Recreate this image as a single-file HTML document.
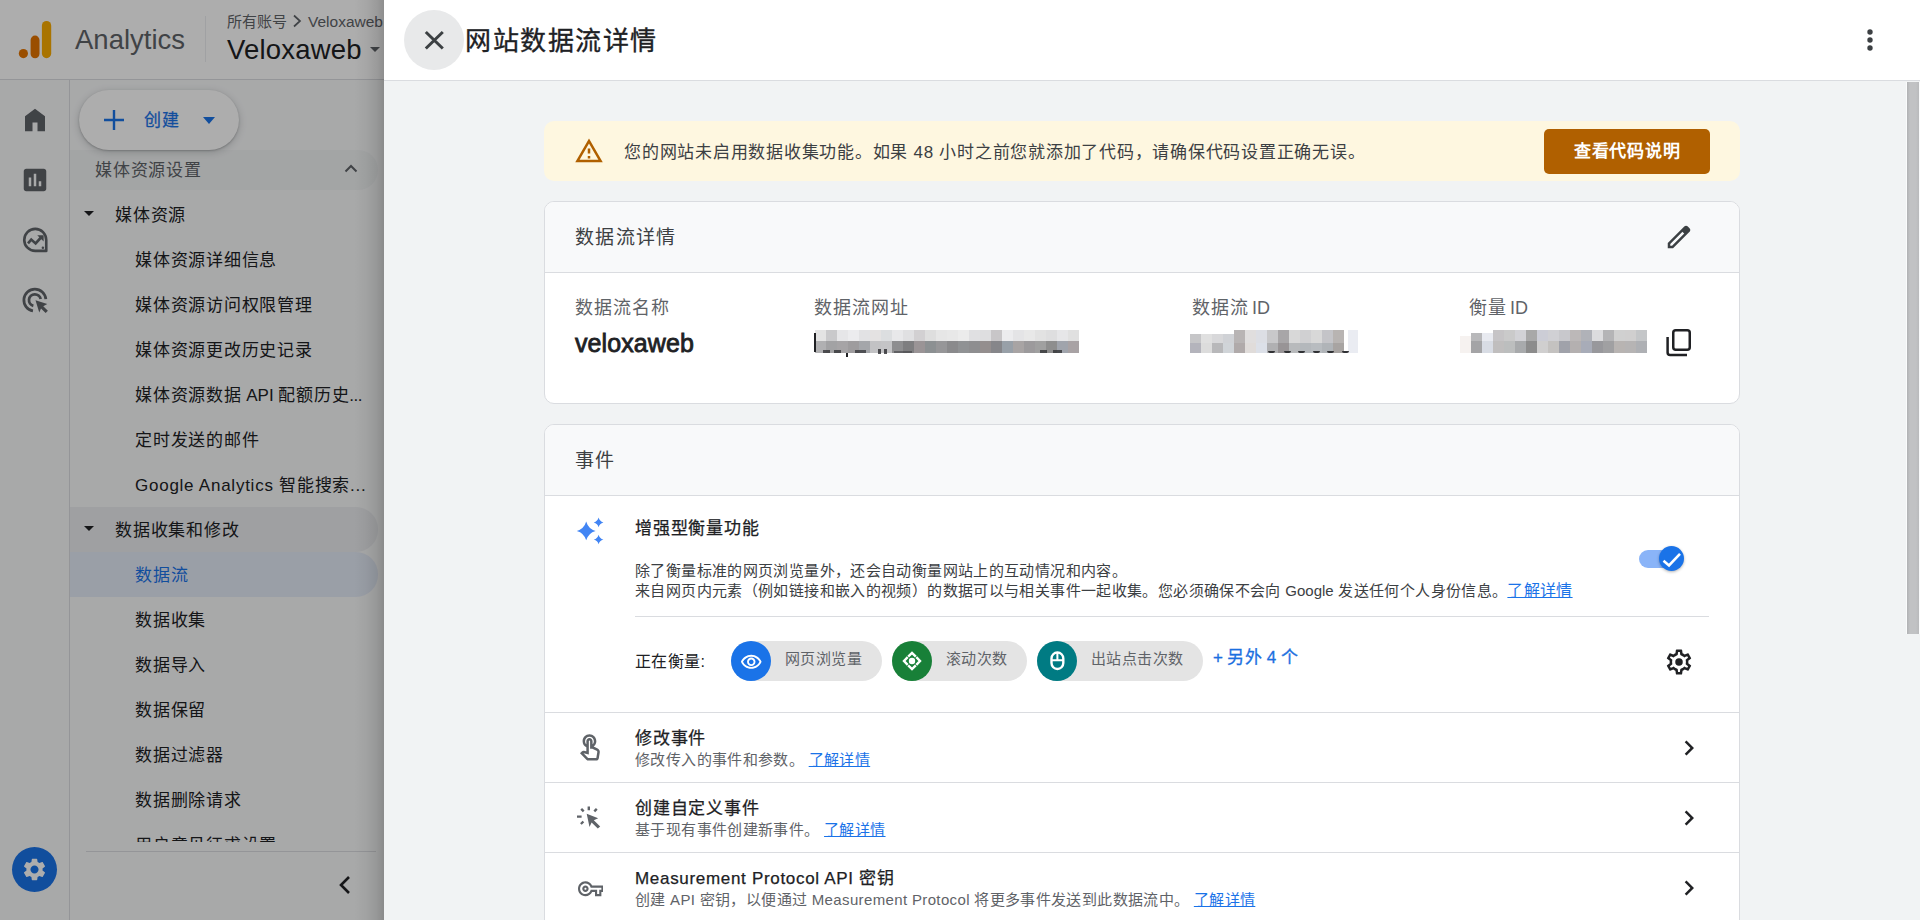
<!DOCTYPE html>
<html lang="zh-CN">
<head>
<meta charset="utf-8">
<title>Analytics</title>
<style>
*{box-sizing:border-box;margin:0;padding:0}
html,body{width:1920px;height:920px;overflow:hidden;background:#f1f3f4;font-family:"Liberation Sans",sans-serif;color:#202124}
.abs{position:absolute}
/* ---------- left (dimmed) ---------- */
#left{position:absolute;left:0;top:0;width:384px;height:920px;background:#f8f9fa;overflow:hidden}
#lhead{position:absolute;left:0;top:0;width:384px;height:80px;background:#fff;border-bottom:1px solid #dadce0}
#rail{position:absolute;left:0;top:80px;width:70px;height:840px;border-right:1px solid #dadce0}
#nav{position:absolute;left:70px;top:80px;width:314px;height:840px}
#dim{position:absolute;left:0;top:0;width:384px;height:920px;background:rgba(0,0,0,.32)}
#edge{position:absolute;left:354px;top:0;width:30px;height:920px;background:linear-gradient(90deg,rgba(0,0,0,0),rgba(0,0,0,.04) 40%,rgba(0,0,0,.1) 75%,rgba(0,0,0,.18))}
.ni{position:absolute;left:65px;font-size:17px;letter-spacing:.75px;line-height:24px;white-space:nowrap;color:#202124}
.ng{position:absolute;left:45px;font-size:17px;letter-spacing:.75px;line-height:24px;white-space:nowrap;color:#202124}
.tri{position:absolute;width:0;height:0;border-left:5px solid transparent;border-right:5px solid transparent;border-top:5px solid #202124}
/* ---------- main ---------- */
#main{position:absolute;left:384px;top:0;width:1536px;height:920px;background:#f1f3f4;overflow:hidden}
#mhead{position:absolute;left:0;top:0;width:1536px;height:81px;background:#fff;border-bottom:1px solid #dadce0}
.card{position:absolute;left:160px;width:1196px;background:#fff;border:1px solid #dadce0;border-radius:10px;overflow:hidden}
.chead{position:absolute;left:0;top:0;width:100%;height:71px;background:#f8f9fa;border-bottom:1px solid #dadce0}
.chead span{position:absolute;left:30px;top:23px;font-size:19px;letter-spacing:1.25px;line-height:26px;color:#3c4043}
.lbl{position:absolute;font-size:18px;letter-spacing:1px;line-height:24px;color:#5f6368;white-space:nowrap}
.blur{position:absolute;height:24px;filter:blur(1.2px);opacity:.9}
.row{position:absolute;left:0;width:100%;height:70px;border-top:1px solid #dadce0}
.row .t{position:absolute;left:90px;top:14px;font-size:17px;letter-spacing:.75px;line-height:24px;-webkit-text-stroke:.25px #202124;color:#202124;white-space:nowrap}
.row .d{position:absolute;left:90px;top:37px;font-size:15px;letter-spacing:.375px;line-height:20px;color:#5f6368;white-space:nowrap}
a.lk{color:#1a73e8;text-decoration:underline;font-size:16px;letter-spacing:.3px;text-underline-offset:1px;text-decoration-thickness:1px}
.chip{position:absolute;top:0;height:40px;border-radius:20px;background:#e4e4e4;font-size:15px;letter-spacing:.375px;line-height:40px;color:#5f6368;white-space:nowrap}
.chip i{position:absolute;left:0;top:0;width:40px;height:40px;border-radius:50%}
.chip span{position:absolute;left:54px;top:-2px}
.row a.lk{font-size:15px;letter-spacing:.375px}
</style>
</head>
<body>
<!-- LEFT -->
<div id="left">
  <div id="lhead">
    <svg class="abs" style="left:0;top:0" width="70" height="80" viewBox="0 0 70 80">
      <circle cx="23.4" cy="53.6" r="4.6" fill="#e37400"/>
      <rect x="30.6" y="35.6" width="8.9" height="22.6" rx="4.45" fill="#e37400"/>
      <rect x="41.9" y="21" width="9.3" height="37.2" rx="4.65" fill="#f9ab00"/>
    </svg>
    <div class="abs" id="t-analytics" style="left:75px;top:24px;font-size:27.5px;line-height:32px;color:#5f6368;white-space:nowrap">Analytics</div>
    <div class="abs" style="left:205px;top:16px;width:1px;height:46px;background:#eceef0"></div>
    <div class="abs" id="t-crumb" style="left:227px;top:12px;font-size:15px;line-height:20px;color:#5f6368;white-space:nowrap">所有账号</div>
    <svg class="abs" style="left:290px;top:13px" width="14" height="16" viewBox="0 0 14 16"><path d="M4 2.5 L10 8 L4 13.5" fill="none" stroke="#5f6368" stroke-width="1.7"/></svg>
    <div class="abs" id="t-crumb2" style="left:308px;top:12px;font-size:15.5px;line-height:20px;color:#5f6368;white-space:nowrap">Veloxaweb</div>
    <div class="abs" id="t-prop" style="left:227px;top:34px;letter-spacing:.2px;font-size:27.5px;line-height:32px;color:#202124;white-space:nowrap">Veloxaweb</div>
    <div class="tri" style="left:369.5px;top:47px;border-left-width:5.2px;border-right-width:5.2px;border-top-width:5.2px;border-top-color:#5f6368"></div>
  </div>
  <div id="rail">
    <!-- home -->
    <svg class="abs" style="left:20px;top:25px" width="30" height="30" viewBox="0 0 24 24"><path d="M4 21V9l8-6 8 6v12h-6v-7h-4v7z" fill="#5f6368"/></svg>
    <!-- reports -->
    <svg class="abs" style="left:20px;top:85px" width="30" height="30" viewBox="0 0 24 24"><path d="M19 3H5c-1.1 0-2 .9-2 2v14c0 1.100.9 2 2 2h14c1.100 0 2-.9 2-2V5c0-1.100-.9-2-2-2zM9 17H7v-7h2v7zm4 0h-2V7h2v10zm4 0h-2v-4h2v4z" fill="#5f6368"/></svg>
    <!-- explore -->
    <svg class="abs" style="left:20px;top:145px" width="30" height="30" viewBox="0 0 24 24"><path d="M12.200 3.100 A8.800 8.800 0 1 0 12.200 20.700 H21 V11.900 A8.800 8.800 0 0 0 12.200 3.100 Z" fill="none" stroke="#5f6368" stroke-width="2.100" stroke-linejoin="round"/><path d="M6.400 14.700 L9 11.700 L12.500 14.700 L16.600 10.200" fill="none" stroke="#5f6368" stroke-width="2.100"/><path d="M13.800 8.100 H18.900 V13.200 Z" fill="#5f6368"/><circle cx="18.300" cy="18.100" r="1" fill="#5f6368"/></svg>
    <!-- advertising -->
    <svg class="abs" style="left:20px;top:205px" width="30" height="30" viewBox="0 0 24 24"><path d="M10.370 20.770 A8.800 8.800 0 1 1 20.670 11.330" fill="none" stroke="#5f6368" stroke-width="2.200"/><path d="M10.680 16.640 A4.700 4.700 0 1 1 16.530 11.280" fill="none" stroke="#5f6368" stroke-width="2.200"/><path d="M12.400 12.200 L21.800 15.200 L18.600 16.900 L22.300 20.600 L20.500 22.400 L16.800 18.700 L15.400 21.900 Z" fill="#5f6368"/></svg>
    <!-- settings -->
    <div class="abs" style="left:12px;top:767px;width:45px;height:45px;border-radius:50%;background:#1a73e8"></div>
    <svg class="abs" style="left:21px;top:776px" width="27" height="27" viewBox="0 0 24 24"><path fill="#fff" d="M19.140 12.940c.040-.3.060-.61.060-.940 0-.320-.020-.640-.070-.940l2.030-1.580c.180-.140.230-.410.120-.610l-1.920-3.320c-.120-.220-.370-.290-.590-.220l-2.390.960c-.5-.380-1.030-.7-1.620-.940l-.36-2.540c-.040-.240-.240-.410-.480-.410h-3.840c-.240 0-.430.170-.470.410l-.36 2.540c-.59.240-1.130.570-1.620.940l-2.390-.960c-.220-.080-.470 0-.590.220L2.740 8.870c-.120.210-.080.470.120.610l2.030 1.580c-.050.3-.090.630-.090.940s.020.640.070.940l-2.030 1.580c-.180.140-.230.410-.120.610l1.920 3.320c.120.220.370.290.590.220l2.390-.960c.5.380 1.030.7 1.620.940l.36 2.540c.050.240.240.410.480.410h3.840c.240 0 .440-.170.470-.410l.36-2.540c.59-.240 1.130-.560 1.620-.940l2.390.960c.220.080.470 0 .59-.220l1.920-3.320c.120-.220.070-.470-.120-.610l-2.010-1.580zM12 15.600c-1.980 0-3.600-1.620-3.600-3.600s1.620-3.600 3.600-3.600 3.600 1.620 3.600 3.600-1.620 3.600-3.600 3.600z"/></svg>
  </div>
  <div id="nav">
    <div class="abs" style="left:0;top:70px;width:308px;height:40px;border-radius:0 20px 20px 0;background:#f1f3f4"></div>
    <div class="abs" style="left:25px;top:79px;font-size:17px;letter-spacing:.75px;line-height:24px;color:#5f6368;white-space:nowrap">媒体资源设置</div>
    <svg class="abs" style="left:273px;top:81px" width="16" height="16" viewBox="0 0 16 16"><path d="M2.500 10.500 L8 5 L13.500 10.500" fill="none" stroke="#5f6368" stroke-width="2"/></svg>
    <div class="tri" style="left:14px;top:131px"></div>
    <div class="ng" style="top:124px">媒体资源</div>
    <div class="ni" style="top:169px">媒体资源详细信息</div>
    <div class="ni" style="top:214px">媒体资源访问权限管理</div>
    <div class="ni" style="top:259px">媒体资源更改历史记录</div>
    <div class="ni" style="top:304px">媒体资源数据<span style="letter-spacing:0"> API </span>配额历史<span style="letter-spacing:-.5px">...</span></div>
    <div class="ni" style="top:349px">定时发送的邮件</div>
    <div class="ni" style="top:394px">Google Analytics 智能搜索...</div>
    <div class="abs" style="left:0;top:427px;width:308px;height:45px;border-radius:0 22px 22px 0;background:#eaecef"></div>
    <div class="tri" style="left:14px;top:446px"></div>
    <div class="ng" style="top:439px">数据收集和修改</div>
    <div class="abs" style="left:0;top:472px;width:308px;height:45px;border-radius:0 22px 22px 0;background:#e4eaf6"></div>
    <div class="ni" style="top:484px;color:#1a73e8">数据流</div>
    <div class="ni" style="top:529px">数据收集</div>
    <div class="ni" style="top:574px">数据导入</div>
    <div class="ni" style="top:619px">数据保留</div>
    <div class="ni" style="top:664px">数据过滤器</div>
    <div class="ni" style="top:709px">数据删除请求</div>
    <div class="ni" style="top:754px">用户意见征求设置</div>
    <div class="abs" style="left:0;top:762px;width:314px;height:78px;background:#f8f9fa"></div>
    <div class="abs" style="left:16px;top:771px;width:290px;height:1px;background:#dadce0"></div>
    <svg class="abs" style="left:265px;top:794px" width="20" height="22" viewBox="0 0 20 22"><path d="M14 3 L6 11 L14 19" fill="none" stroke="#202124" stroke-width="2.6"/></svg>
    <div class="abs" style="left:9px;top:10px;width:160px;height:60px;border-radius:30px;background:#fff;box-shadow:0 1px 2px rgba(60,64,67,.3),0 2px 6px 2px rgba(60,64,67,.15)"></div>
    <svg class="abs" style="left:33px;top:29px" width="22" height="22" viewBox="0 0 22 22"><path d="M11 1 V21 M1 11 H21" stroke="#1a73e8" stroke-width="2.4" fill="none"/></svg>
    <div class="abs" style="left:74px;top:29px;font-size:17px;letter-spacing:.75px;line-height:24px;color:#1a73e8;-webkit-text-stroke:.25px #1a73e8;white-space:nowrap">创建</div>
    <div class="tri" style="left:133px;top:37px;border-left-width:6px;border-right-width:6px;border-top-width:7px;border-top-color:#1a73e8"></div>
  </div>
  <div id="dim"></div>
  <div id="edge"></div>
</div>
<!-- MAIN -->
<div id="main">
  <div id="mhead">
    <div class="abs" style="left:20px;top:10px;width:60px;height:60px;border-radius:50%;background:#e8e9ea"></div>
    <svg class="abs" style="left:38px;top:28px" width="24" height="24" viewBox="0 0 24 24"><path d="M3.800 4 L20.800 20.500 M20.800 4 L3.800 20.500" stroke="#3c4043" stroke-width="3" fill="none"/></svg>
    <div class="abs" id="t-title" style="left:81px;top:23px;font-size:26px;letter-spacing:1.5px;line-height:36px;color:#202124;-webkit-text-stroke:.35px #202124;white-space:nowrap">网站数据流详情</div>
    <svg class="abs" style="left:1481px;top:26px" width="10" height="28" viewBox="0 0 10 28"><circle cx="5" cy="6" r="2.700" fill="#3c4043"/><circle cx="5" cy="14" r="2.700" fill="#3c4043"/><circle cx="5" cy="22" r="2.700" fill="#3c4043"/></svg>
  </div>
  <div id="content">
    <!-- banner -->
    <div class="abs" style="left:160px;top:121px;width:1196px;height:60px;border-radius:10px;background:#fef7e0"></div>
    <svg class="abs" style="left:190.25px;top:136.25px" width="30" height="30" viewBox="0 0 24 24"><path fill="#b06000" d="M12 5.990L19.530 19H4.470L12 5.990M12 2L1 21h22L12 2zm1 14h-2v2h2v-2zm0-6h-2v4h2v-4z"/></svg>
    <div class="abs" id="t-warn" style="left:240px;top:141px;font-size:17px;letter-spacing:.75px;line-height:24px;color:#3c4043;white-space:nowrap">您的网站未启用数据收集功能。如果 48 小时之前您就添加了代码，请确保代码设置正确无误。</div>
    <div class="abs" style="left:1160px;top:129px;width:166px;height:45px;border-radius:5px;background:#b06000;color:#fff;font-size:17px;letter-spacing:.75px;font-weight:700;line-height:45px;text-align:center;white-space:nowrap">查看代码说明</div>

    <!-- card 1 -->
    <div class="card" style="top:201px;height:203px">
      <div class="chead"><span>数据流详情</span></div>
      <svg class="abs" style="left:1119px;top:20px" width="30" height="30" viewBox="0 -960 960 960"><path d="M200-200h57l391-391-57-57-391 391v57Zm-80 80v-170l528-527q12-11 26.500-17t30.500-6q16 0 31 6t26 18l55 56q12 11 17.500 26t5.500 30q0 16-5.500 30.500T817-647L290-120H120Zm640-584-56-56 56 56Zm-141 85-28-29 57 57-29-28Z" fill="#3c4043"/></svg>
      <div class="lbl" style="left:30px;top:94px">数据流名称</div>
      <div class="lbl" style="left:269px;top:94px">数据流网址</div>
      <div class="lbl" style="left:647px;top:94px">数据流<span style="letter-spacing:0;word-spacing:-2px"> ID</span></div>
      <div class="lbl" style="left:924px;top:94px">衡量<span style="letter-spacing:0;word-spacing:-2px"> ID</span></div>
      <div class="abs" id="t-name" style="left:30px;top:126px;font-size:25px;line-height:30px;-webkit-text-stroke:.8px #202124;letter-spacing:.1px;color:#202124;white-space:nowrap">veloxaweb</div>
      <svg class="abs" style="left:1117px;top:124px" width="32" height="34" viewBox="0 0 32 34"><rect x="11.25" y="4.25" width="16.500" height="19.600" rx="2.500" fill="none" stroke="#202124" stroke-width="2.500"/><path d="M5.60 11.00 V26.60 Q5.60 29.10 8.10 29.10 H25.00" fill="none" stroke="#202124" stroke-width="2.500"/></svg>
      <div class="abs" style="left:270px;top:128px;width:264px;height:11px;background:linear-gradient(90deg,#e3e3e3 0px,#e3e3e3 11px,#c9c9cb 11px,#c9c9cb 22px,#e6e6e8 22px,#e6e6e8 33px,#ececee 33px,#ececee 44px,#e2e2e4 44px,#e2e2e4 55px,#e4e2e2 55px,#e4e2e2 66px,#dcdee0 66px,#dcdee0 77px,#e8e8ea 77px,#e8e8ea 88px,#e0e0e2 88px,#e0e0e2 99px,#d2d0d2 99px,#d2d0d2 110px,#dedede 110px,#dedede 121px,#e6e6e6 121px,#e6e6e6 132px,#e8e8e8 132px,#e8e8e8 143px,#ececec 143px,#ececec 154px,#e0e0e2 154px,#e0e0e2 165px,#dedee0 165px,#dedee0 176px,#c8c6c8 176px,#c8c6c8 187px,#ececee 187px,#ececee 198px,#e4e4e6 198px,#e4e4e6 209px,#e8e8e8 209px,#e8e8e8 220px,#e2e2e2 220px,#e2e2e2 231px,#dededf 231px,#dededf 242px,#e6e6e8 242px,#e6e6e8 253px,#e0e0e0 253px,#e0e0e0 264px)"></div><div class="abs" style="left:270px;top:139px;width:264px;height:12px;background:linear-gradient(90deg,#b0b0b2 0px,#b0b0b2 11px,#a2a2a4 11px,#a2a2a4 22px,#a6a4a6 22px,#a6a4a6 33px,#9e9c9e 33px,#9e9c9e 44px,#a4a6aa 44px,#a4a6aa 55px,#c2c2c4 55px,#c2c2c4 66px,#c4c4c6 66px,#c4c4c6 77px,#8e8e90 77px,#8e8e90 88px,#7e7e80 88px,#7e7e80 99px,#9a9496 99px,#9a9496 110px,#8c9092 110px,#8c9092 121px,#969698 121px,#969698 132px,#8a8a8c 132px,#8a8a8c 143px,#909294 143px,#909294 154px,#8e8e90 154px,#8e8e90 165px,#948e8e 165px,#948e8e 176px,#86868a 176px,#86868a 187px,#98a0a8 187px,#98a0a8 198px,#a8a4a4 198px,#a8a4a4 209px,#9c9a9c 209px,#9c9a9c 220px,#a0a0a0 220px,#a0a0a0 231px,#8e8e8e 231px,#8e8e8e 242px,#a0a4ac 242px,#a0a4ac 253px,#a8a2a4 253px,#a8a2a4 264px)"></div><div class="abs" style="left:269px;top:131px;width:2px;height:19px;background:#202124"></div><div class="abs" style="left:301px;top:151px;width:2px;height:4px;background:#202124"></div><div class="abs" style="left:278px;top:148px;width:7px;height:3px;background:#2a2b2e;opacity:0.75"></div><div class="abs" style="left:289px;top:148px;width:7px;height:3px;background:#2a2b2e;opacity:0.75"></div><div class="abs" style="left:310px;top:148px;width:11px;height:3px;background:#2a2b2e;opacity:0.7"></div><div class="abs" style="left:333px;top:147px;width:3px;height:5px;background:#2a2b2e;opacity:0.8"></div><div class="abs" style="left:339px;top:147px;width:3px;height:5px;background:#2a2b2e;opacity:0.8"></div><div class="abs" style="left:349px;top:149px;width:18px;height:2px;background:#2a2b2e;opacity:0.45"></div><div class="abs" style="left:495px;top:148px;width:7px;height:3px;background:#2a2b2e;opacity:0.75"></div><div class="abs" style="left:508px;top:148px;width:9px;height:3px;background:#2a2b2e;opacity:0.75"></div>
      <div class="abs" style="left:645px;top:132px;width:154px;height:9px;background:linear-gradient(90deg,#c6c6c8 0px,#c6c6c8 11px,#e0e0e0 11px,#e0e0e0 22px,#d8d8da 22px,#d8d8da 33px,#d0d2d6 33px,#d0d2d6 44px,#b8b4b4 44px,#b8b4b4 55px,#e0dede 55px,#e0dede 66px,#dcdee4 66px,#dcdee4 77px,#c8c8ca 77px,#c8c8ca 88px,#a8a6a8 88px,#a8a6a8 99px,#d8d8d8 99px,#d8d8d8 110px,#d0d0d2 110px,#d0d0d2 121px,#d8d8d8 121px,#d8d8d8 132px,#c4c4c8 132px,#c4c4c8 143px,#b8b4b2 143px,#b8b4b2 154px)"></div><div class="abs" style="left:645px;top:141px;width:154px;height:10px;background:linear-gradient(90deg,#b4b4bc 0px,#b4b4bc 11px,#dcdcdc 11px,#dcdcdc 22px,#b8b8ba 22px,#b8b8ba 33px,#d0d4d8 33px,#d0d4d8 44px,#b0aaaa 44px,#b0aaaa 55px,#e0dcda 55px,#e0dcda 66px,#dce0e8 66px,#dce0e8 77px,#b0b0b2 77px,#b0b0b2 88px,#989496 88px,#989496 99px,#b8babc 99px,#b8babc 110px,#b4b8bc 110px,#b4b8bc 121px,#b8bcc0 121px,#b8bcc0 132px,#b0b4b8 132px,#b0b4b8 143px,#a8a4a2 143px,#a8a4a2 154px)"></div><div class="abs" style="left:689px;top:128px;width:110px;height:4px;background:linear-gradient(90deg,#b8b4b4 0px,#b8b4b4 11px,#e0dede 11px,#e0dede 22px,#dcdee4 22px,#dcdee4 33px,#c8c8ca 33px,#c8c8ca 44px,#a8a6a8 44px,#a8a6a8 55px,#d8d8d8 55px,#d8d8d8 66px,#d0d0d2 66px,#d0d0d2 77px,#d8d8d8 77px,#d8d8d8 88px,#c4c4c8 88px,#c4c4c8 99px,#b8b4b2 99px,#b8b4b2 110px)"></div><div class="abs" style="left:803px;top:128px;width:10px;height:23px;background:#eaecf2"></div><div class="abs" style="left:723px;top:149px;width:7px;height:2px;border-radius:0 0 4px 4px;background:#303134"></div><div class="abs" style="left:739px;top:149px;width:7px;height:2px;border-radius:0 0 4px 4px;background:#303134"></div><div class="abs" style="left:753px;top:149px;width:7px;height:2px;border-radius:0 0 4px 4px;background:#303134"></div><div class="abs" style="left:768px;top:149px;width:7px;height:2px;border-radius:0 0 4px 4px;background:#303134"></div><div class="abs" style="left:782px;top:149px;width:7px;height:2px;border-radius:0 0 4px 4px;background:#303134"></div><div class="abs" style="left:797px;top:149px;width:7px;height:2px;border-radius:0 0 4px 4px;background:#303134"></div>
      <div class="abs" style="left:926px;top:131px;width:176px;height:8px;background:linear-gradient(90deg,#b8b8ba 0px,#b8b8ba 11px,#e8eaf0 11px,#e8eaf0 22px,#c6c4c6 22px,#c6c4c6 33px,#cacaca 33px,#cacaca 44px,#d2d2d6 44px,#d2d2d6 55px,#a8a8a8 55px,#a8a8a8 66px,#cccdd6 66px,#cccdd6 77px,#d0d0d4 77px,#d0d0d4 88px,#c8c8cc 88px,#c8c8cc 99px,#bcb8b8 99px,#bcb8b8 110px,#b0b2b8 110px,#b0b2b8 121px,#dcdcde 121px,#dcdcde 132px,#b4b4b6 132px,#b4b4b6 143px,#d0d0d0 143px,#d0d0d0 154px,#d0cfcf 154px,#d0cfcf 165px,#c4c6c8 165px,#c4c6c8 176px)"></div><div class="abs" style="left:926px;top:139px;width:176px;height:12px;background:linear-gradient(90deg,#a4a4a6 0px,#a4a4a6 11px,#d8dce4 11px,#d8dce4 22px,#c0bebe 22px,#c0bebe 33px,#bcbebe 33px,#bcbebe 44px,#a8aaac 44px,#a8aaac 55px,#8c8c8c 55px,#8c8c8c 66px,#d0cfcf 66px,#d0cfcf 77px,#c4c2c0 77px,#c4c2c0 88px,#a0a2aa 88px,#a0a2aa 99px,#b4b0b0 99px,#b4b0b0 110px,#a8acb8 110px,#a8acb8 121px,#98989c 121px,#98989c 132px,#a0a0a2 132px,#a0a0a2 143px,#b8b4b2 143px,#b8b4b2 154px,#b6b4b4 154px,#b6b4b4 165px,#aeb0b4 165px,#aeb0b4 176px)"></div><div class="abs" style="left:948px;top:128px;width:154px;height:3px;background:linear-gradient(90deg,#c6c4c6 0px,#c6c4c6 11px,#cacaca 11px,#cacaca 22px,#d2d2d6 22px,#d2d2d6 33px,#a8a8a8 33px,#a8a8a8 44px,#cccdd6 44px,#cccdd6 55px,#d0d0d4 55px,#d0d0d4 66px,#c8c8cc 66px,#c8c8cc 77px,#bcb8b8 77px,#bcb8b8 88px,#b0b2b8 88px,#b0b2b8 99px,#dcdcde 99px,#dcdcde 110px,#b4b4b6 110px,#b4b4b6 121px,#d0d0d0 121px,#d0d0d0 132px,#d0cfcf 132px,#d0cfcf 143px,#c4c6c8 143px,#c4c6c8 154px)"></div><div class="abs" style="left:915px;top:134px;width:11px;height:17px;background:#f6f2f0"></div>
    </div>

    <!-- card 2 -->
    <div class="card" style="top:424px;height:520px">
      <div class="chead"><span>事件</span></div>
      <div class="abs" id="t-enh" style="left:90px;top:92px;font-size:17px;letter-spacing:.75px;line-height:24px;-webkit-text-stroke:.25px #202124;color:#202124;white-space:nowrap">增强型衡量功能</div>
      <div class="abs" style="left:90px;top:136px;font-size:15px;letter-spacing:.375px;line-height:20px;color:#3c4043;white-space:nowrap">除了衡量标准的网页浏览量外，还会自动衡量网站上的互动情况和内容。<br>来自网页内元素（例如链接和嵌入的视频）的数据可以与相关事件一起收集。您必须确保不会向<span style="letter-spacing:0;word-spacing:.4px"> Google </span>发送任何个人身份信息。<a class="lk">了解详情</a></div>
      <div class="abs" style="left:90px;top:191px;width:1074px;height:1px;background:#dadce0"></div>
      <div class="abs" style="left:90px;top:225px;font-size:16px;letter-spacing:.4px;line-height:24px;color:#202124;white-space:nowrap">正在衡量:</div>
      <div class="abs" style="left:186px;top:216px;width:0;height:40px">
        <div class="chip" style="left:0;width:151px"><i style="background:#1a73e8"><svg class="abs" style="left:8.75px;top:9.75px" width="22.5" height="22.5" viewBox="0 0 24 24"><path fill="#fff" d="M12 6c3.790 0 7.170 2.130 8.820 5.500C19.170 14.870 15.790 17 12 17s-7.170-2.130-8.820-5.500C4.830 8.130 8.210 6 12 6m0-2C7 4 2.730 7.110 1 11.500 2.730 15.890 7 19 12 19s9.270-3.110 11-7.500C21.270 7.110 17 4 12 4zm0 5c1.380 0 2.500 1.120 2.500 2.500S13.380 14 12 14s-2.500-1.120-2.500-2.500S10.620 9 12 9m0-2c-2.480 0-4.500 2.020-4.500 4.500S9.520 16 12 16s4.500-2.020 4.500-4.500S14.480 7 12 7z"/></svg></i><span>网页浏览量</span></div>
        <div class="chip" style="left:161px;width:135px"><i style="background:#188038"><svg class="abs" style="left:0;top:0" width="40" height="40" viewBox="-20 -20 40 40"><path fill="none" stroke="#fff" stroke-width="2.400" d="M-3.800 -4.300 L0 -8 L3.800 -4.300 M-3.800 4.300 L0 8 L3.800 4.300 M-4.300 -3.800 L-8 0 L-4.300 3.800 M4.300 -3.800 L8 0 L4.300 3.800"/><circle cx="0" cy="0" r="3.200" fill="#fff"/></svg></i><span>滚动次数</span></div>
        <div class="chip" style="left:306px;width:166px"><i style="background:#007b83"><svg class="abs" style="left:0;top:0" width="40" height="40" viewBox="-20 -20 40 40"><rect x="-5.500" y="-8.500" width="11.800" height="16.500" rx="5.900" fill="none" stroke="#fff" stroke-width="2.400"/><path d="M-5.500 -0.800 H6.300 M0.400 -8.500 V-0.800" stroke="#fff" stroke-width="2" fill="none"/></svg></i><span>出站点击次数</span></div>
      </div>
      <div class="abs" style="left:668px;top:221px;font-size:17px;letter-spacing:.75px;line-height:24px;-webkit-text-stroke:.3px #1a6ee0;color:#1a6ee0;word-spacing:-1.7px;white-space:nowrap">+ 另外 4 个</div>

      
      <svg class="abs" style="left:25px;top:85px" width="40" height="40" viewBox="0 0 40 40"><path fill="#4285f4" d="M16.20 11.50 Q18.27 18.83 25.60 20.90 Q18.27 22.97 16.20 30.30 Q14.13 22.97 6.80 20.90 Q14.13 18.83 16.20 11.50Z M28.60 7.60 Q29.56 11.44 33.40 12.40 Q29.56 13.36 28.60 17.20 Q27.64 13.36 23.80 12.40 Q27.64 11.44 28.60 7.60Z M28.60 24.70 Q29.56 28.54 33.40 29.50 Q29.56 30.46 28.60 34.30 Q27.64 30.46 23.80 29.50 Q27.64 28.54 28.60 24.70Z"/></svg>
      <div class="abs" style="left:1094px;top:125px;width:42px;height:17.500px;border-radius:9px;background:#8ab4f8"></div>
      <div class="abs" style="left:1114px;top:121px;width:25px;height:25px;border-radius:50%;background:#1a73e8;box-shadow:0 1px 3px rgba(0,0,0,.3)"></div>
      <svg class="abs" style="left:1114px;top:121px" width="25" height="25" viewBox="0 0 25 25"><path d="M4.500 14.800 L10 19.500 L21 7.800" fill="none" stroke="#fff" stroke-width="2.600"/></svg>
      <svg class="abs" style="left:1119px;top:222px" width="30" height="30" viewBox="0 0 24 24"><path fill="#202124" d="M19.430 12.980c.040-.320.070-.640.070-.980 0-.340-.030-.660-.070-.980l2.110-1.650c.190-.150.240-.420.120-.640l-2-3.460c-.090-.160-.260-.250-.440-.250-.060 0-.120.010-.170.030l-2.490 1c-.520-.4-1.080-.730-1.690-.980l-.380-2.650C14.460 2.180 14.250 2 14 2h-4c-.250 0-.460.180-.490.420l-.380 2.650c-.610.250-1.170.590-1.690.980l-2.490-1c-.060-.020-.120-.030-.180-.030-.170 0-.340.090-.430.250l-2 3.460c-.130.220-.070.490.120.640l2.110 1.650c-.040.320-.070.650-.070.980 0 .330.030.660.070.980l-2.110 1.650c-.190.150-.240.420-.120.640l2 3.460c.090.160.260.250.440.250.060 0 .120-.010.170-.030l2.490-1c.520.4 1.080.730 1.690.980l.380 2.650c.030.240.240.420.490.420h4c.250 0 .460-.180.490-.420l.380-2.650c.610-.250 1.170-.590 1.690-.980l2.490 1c.060.020.120.030.180.030.170 0 .340-.090.430-.250l2-3.460c.120-.220.070-.490-.120-.640l-2.110-1.650zm-1.980-1.710c.040.310.050.520.050.730 0 .210-.020.430-.050.730l-.140 1.130.890.700 1.080.840-.7 1.210-1.270-.510-1.040-.420-.9.680c-.430.320-.840.560-1.250.730l-1.060.430-.160 1.130-.2 1.350h-1.400l-.190-1.350-.160-1.130-1.060-.430c-.430-.180-.830-.410-1.230-.710l-.910-.7-1.060.430-1.270.510-.7-1.210 1.080-.840.890-.7-.140-1.130c-.030-.310-.050-.540-.050-.740s.020-.430.050-.730l.140-1.130-.890-.7-1.080-.840.7-1.210 1.270.510 1.040.420.900-.680c.430-.320.840-.560 1.250-.730l1.060-.430.160-1.130.2-1.350h1.390l.190 1.350.160 1.130 1.060.430c.430.180.830.410 1.230.710l.910.7 1.060-.430 1.270-.510.7 1.210-1.070.850-.890.7.140 1.130z"/><circle cx="12" cy="12" r="3" fill="#202124"/></svg>
      <svg class="abs" style="left:30px;top:308px" width="30" height="30" viewBox="0 0 24 24"><path fill="#5f6368" d="M18.190 12.440l-3.240-1.620c1.290-1 2.120-2.560 2.120-4.320 0-3.030-2.470-5.500-5.500-5.500s-5.500 2.470-5.500 5.500c0 2.130 1.220 3.980 3 4.890v3.260c-2.150-.460-2.020-.440-2.260-.440-.530 0-1.030.210-1.410.590L4 16.220l5.090 5.090c.430.440 1.030.690 1.650.690h6.300c.980 0 1.810-.7 1.970-1.670l.8-4.710c.220-1.300-.430-2.580-1.620-3.180zm-.350 2.850l-.8 4.710h-6.300c-.090 0-.170-.040-.240-.1l-3.680-3.680 4.250.890V6.500c0-.280.220-.5.500-.5s.5.220.5.500v6h1.760l3.460 1.730c.4.200.620.630.550 1.060zM8.070 6.500c0-1.930 1.570-3.500 3.500-3.500s3.500 1.570 3.500 3.500c0 .950-.380 1.810-1 2.440V6.500c0-1.380-1.120-2.500-2.500-2.500s-2.500 1.120-2.500 2.500v2.440c-.620-.630-1-1.490-1-2.440z"/></svg>
      <svg class="abs" style="left:25px;top:372px" width="40" height="40" viewBox="0 0 40 40"><path fill="#5f6368" d="M16.7 16.8 L28.2 21.2 L23.8 23.3 L30.2 29.6 L27.8 31.6 L21.6 25.4 L19.5 30.0Z"/><path fill="none" stroke="#5f6368" stroke-width="2.400" d="M18.8 9.6 L18.8 13.2 M11.2 11.9 L13.7 14.4 M26.8 11.9 L24.3 14.4 M7.0 19.6 L11.6 19.6 M10.9 27.0 L13.4 24.5"/></svg>
      <svg class="abs" style="left:32.8px;top:450.5px" width="25.5" height="25.5" viewBox="0 0 24 24"><path fill="#5f6368" d="M22 19h-6v-4h-2.680c-1.140 2.420-3.600 4-6.320 4-3.860 0-7-3.140-7-7s3.140-7 7-7c2.720 0 5.170 1.580 6.320 4H24v6h-2v4zm-4-2h2v-4h2v-2H11.940l-.230-.670C11.010 8.340 9.110 7 7 7c-2.760 0-5 2.240-5 5s2.240 5 5 5c2.110 0 4.010-1.340 4.710-3.330l.230-.670H18v4zM7 15c-1.650 0-3-1.350-3-3s1.350-3 3-3 3 1.350 3 3-1.350 3-3 3zm0-4c-.550 0-1 .450-1 1s.450 1 1 1 1-.450 1-1-.450-1-1-1z"/></svg>
      <svg class="abs" style="left:1129px;top:308px" width="30" height="30" viewBox="0 0 24 24"><path fill="#202124" d="M10 6L8.590 7.410 13.170 12l-4.580 4.590L10 18l6-6z"/></svg>
      <svg class="abs" style="left:1129px;top:378px" width="30" height="30" viewBox="0 0 24 24"><path fill="#202124" d="M10 6L8.590 7.410 13.170 12l-4.580 4.590L10 18l6-6z"/></svg>
      <svg class="abs" style="left:1129px;top:448px" width="30" height="30" viewBox="0 0 24 24"><path fill="#202124" d="M10 6L8.590 7.410 13.170 12l-4.580 4.590L10 18l6-6z"/></svg>
      <div class="row" style="top:287px"><div class="t">修改事件</div><div class="d">修改传入的事件和参数。 <a class="lk">了解详情</a></div></div>
      <div class="row" style="top:357px"><div class="t">创建自定义事件</div><div class="d">基于现有事件创建新事件。 <a class="lk">了解详情</a></div></div>
      <div class="row" style="top:427px"><div class="t" style="letter-spacing:.69px">Measurement Protocol API 密钥</div><div class="d" style="word-spacing:-.2px">创建 API 密钥，以便通过 Measurement Protocol 将更多事件发送到此数据流中。 <a class="lk">了解详情</a></div></div>
    </div>
  </div>
  <div id="sbar" class="abs" style="left:1522px;top:82px;width:14px;height:552px;border-left:1px solid #fafbfc;border-right:1px solid #fafbfc;background:linear-gradient(90deg,#b0b1b3 0,#c1c2c4 3px,#c1c2c4 9px,#b9babc 12px)"></div>
</div>
</body>
</html>
